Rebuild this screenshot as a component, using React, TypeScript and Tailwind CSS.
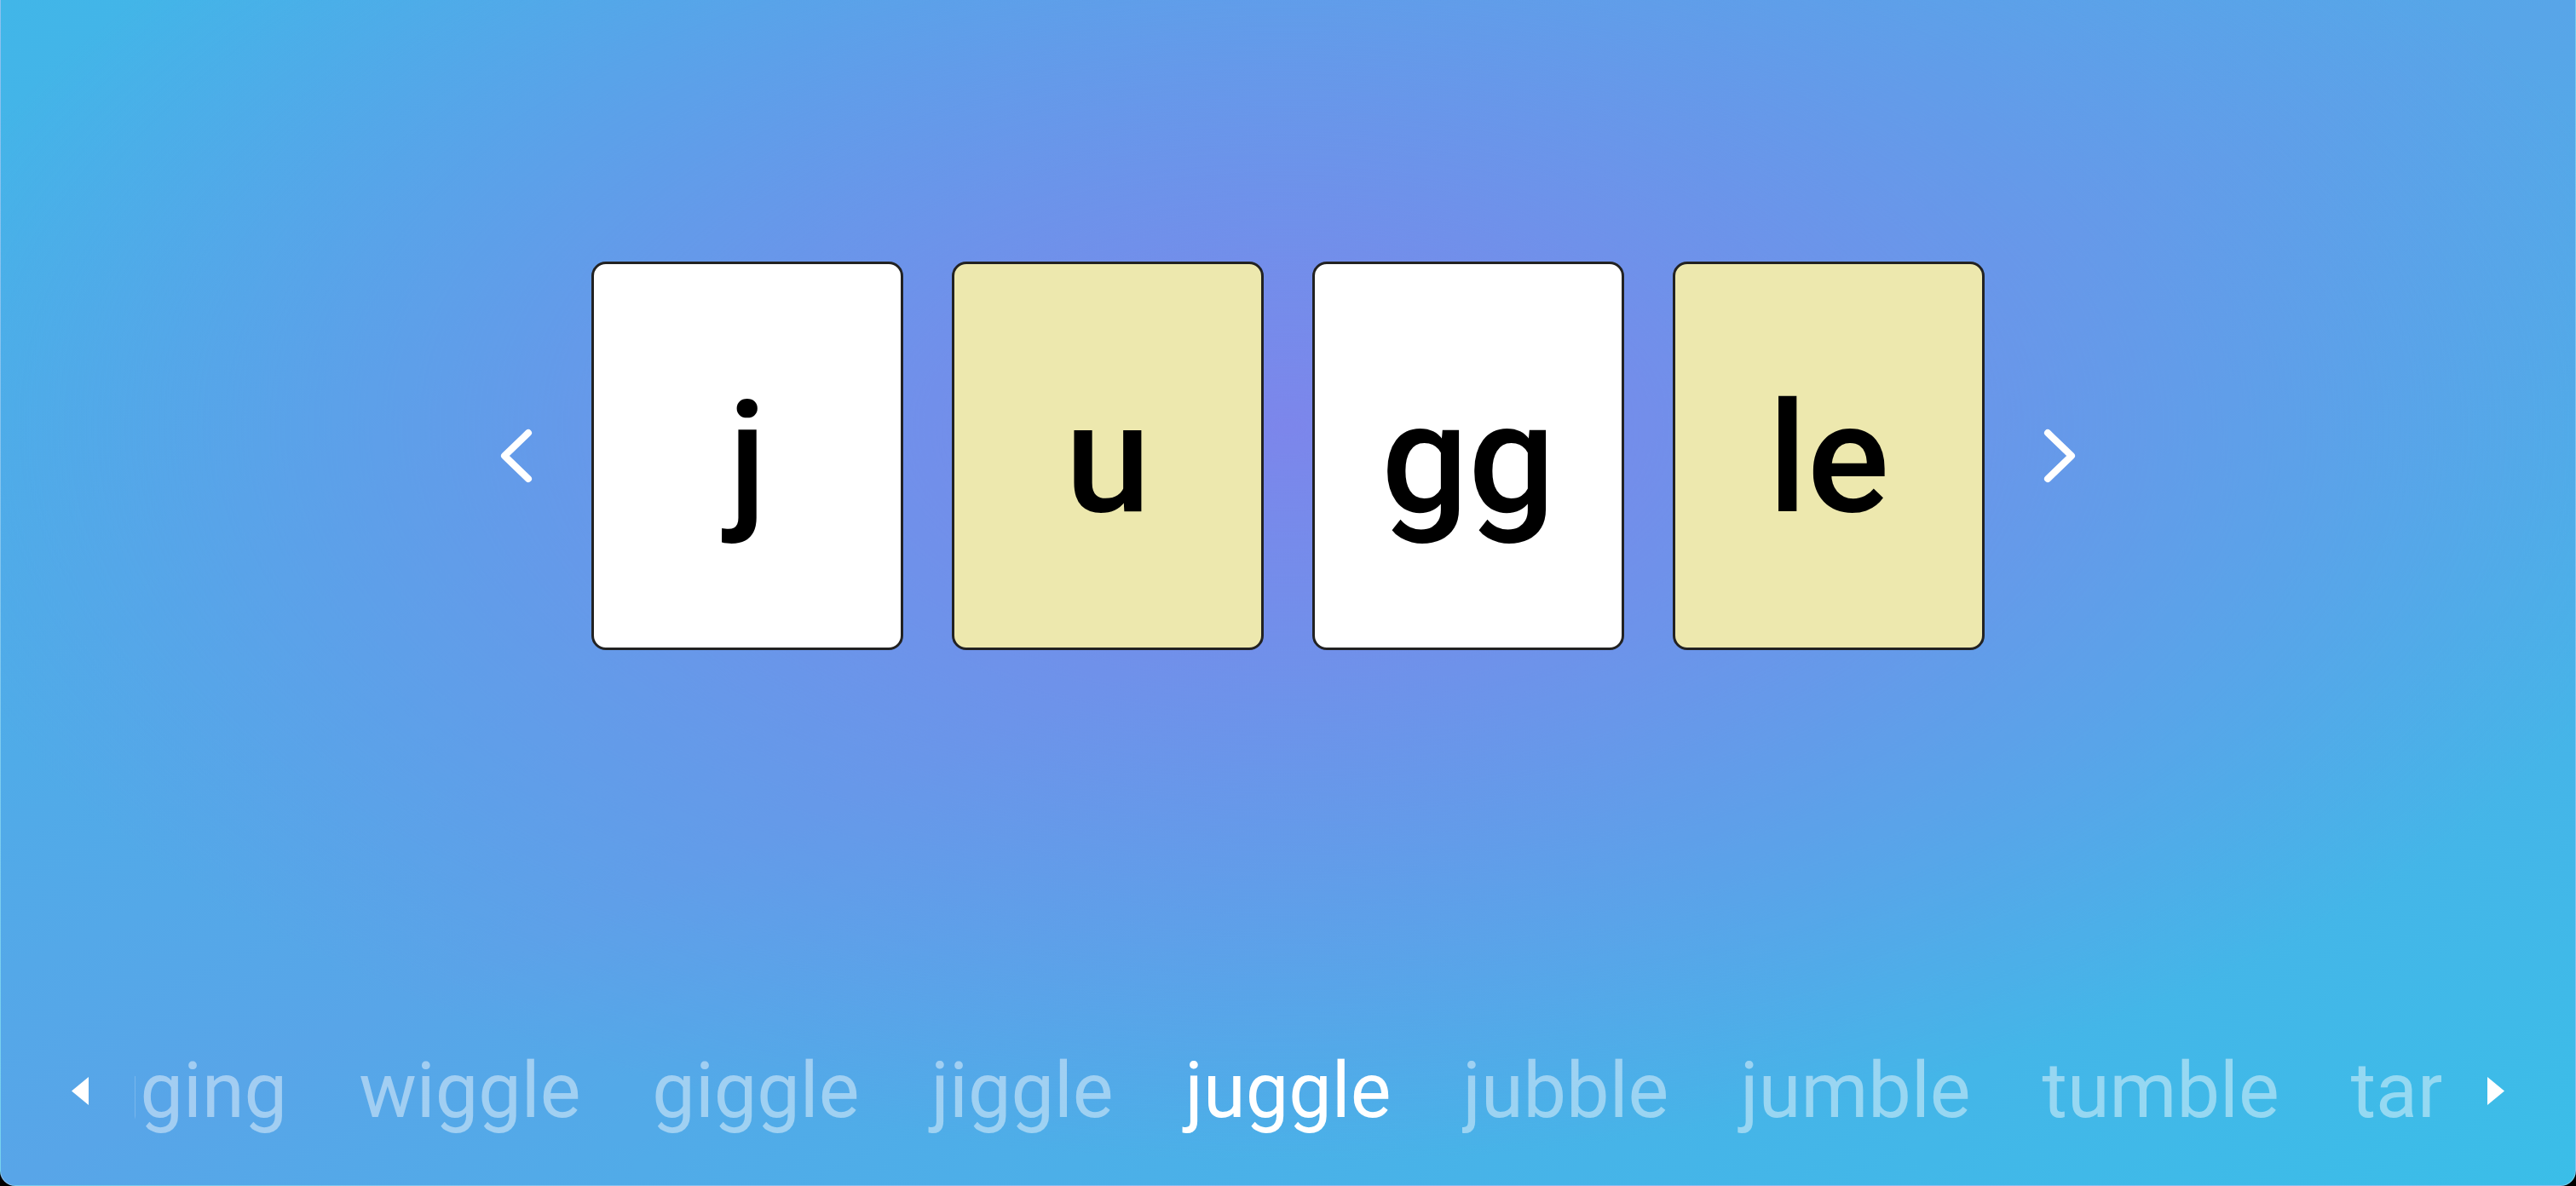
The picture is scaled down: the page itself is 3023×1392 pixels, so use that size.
const tiles = [
  { text: 'j', tone: 'bg-white' },
  { text: 'u', tone: 'bg-[#ede8ae]' },
  { text: 'gg', tone: 'bg-white' },
  { text: 'le', tone: 'bg-[#ede8ae]' },
];

const before = ['jogging', 'wiggle', 'giggle', 'jiggle'];
const after = ['jubble', 'jumble', 'tumble', 'target'];

function Chevron({ dir }: { dir: 'left' | 'right' }) {
  const points = dir === 'left' ? '34,5 6,32 34,59' : '6,5 34,32 6,59';
  return (
    <svg width="40" height="64" viewBox="0 0 40 64" fill="none" className="shrink-0">
      <polyline points={points} stroke="white" strokeWidth="8" strokeLinecap="round" strokeLinejoin="round" />
    </svg>
  );
}

function Triangle({ dir }: { dir: 'left' | 'right' }) {
  const points = dir === 'left' ? '20,0 0,16.5 20,33' : '0,0 20,16.5 0,33';
  return (
    <svg width="20" height="33" viewBox="0 0 20 33" className="shrink-0">
      <polygon points={points} fill="white" />
    </svg>
  );
}

function Word({ text, active }: { text: string; active?: boolean }) {
  return (
    <span className={active ? 'shrink-0 text-white' : 'shrink-0 text-white/45'}>{text}</span>
  );
}

export default function App() {
  return (
    <div className="h-[1392px] w-full bg-black">
      <div className="flex h-full flex-col rounded-b-[18px] border-x border-b border-white/30 bg-[radial-gradient(ellipse_55%_62%_at_50%_36%,rgba(124,134,235,1)_0%,rgba(124,134,235,0)_100%),linear-gradient(to_bottom_right,#41b6e8_0%,#58a5e8_50%,#3abee8_100%)]">
        {/* Letter tiles */}
        <div className="flex items-center justify-center gap-[68px] pt-[307px]">
          <Chevron dir="left" />
          <div className="flex gap-[57px]">
            {tiles.map((t, i) => (
              <div
                key={i}
                className={`flex h-[456px] w-[366px] items-center justify-center rounded-[17px] border-[3px] border-[#222222] pt-[7px] ${t.tone}`}
              >
                <span className="text-[180px] font-medium leading-none text-black" style={{ fontFamily: 'Roboto, sans-serif' }}>
                  {t.text}
                </span>
              </div>
            ))}
          </div>
          <Chevron dir="right" />
        </div>

        {/* Word strip */}
        <div className="mt-auto flex items-center gap-[54px] px-[83px] pb-[43px]">
          <Triangle dir="left" />
          <div
            className="grid flex-1 grid-cols-[1fr_auto_1fr] gap-[84px] text-[90px] leading-normal"
            style={{ fontFamily: 'Roboto, sans-serif' }}
          >
            <div className="flex justify-end gap-[84px] overflow-hidden">
              {before.map((w) => (
                <Word key={w} text={w} />
              ))}
            </div>
            <Word text="juggle" active />
            <div className="flex justify-start gap-[84px] overflow-hidden">
              {after.map((w) => (
                <Word key={w} text={w} />
              ))}
            </div>
          </div>
          <Triangle dir="right" />
        </div>
      </div>
    </div>
  );
}
